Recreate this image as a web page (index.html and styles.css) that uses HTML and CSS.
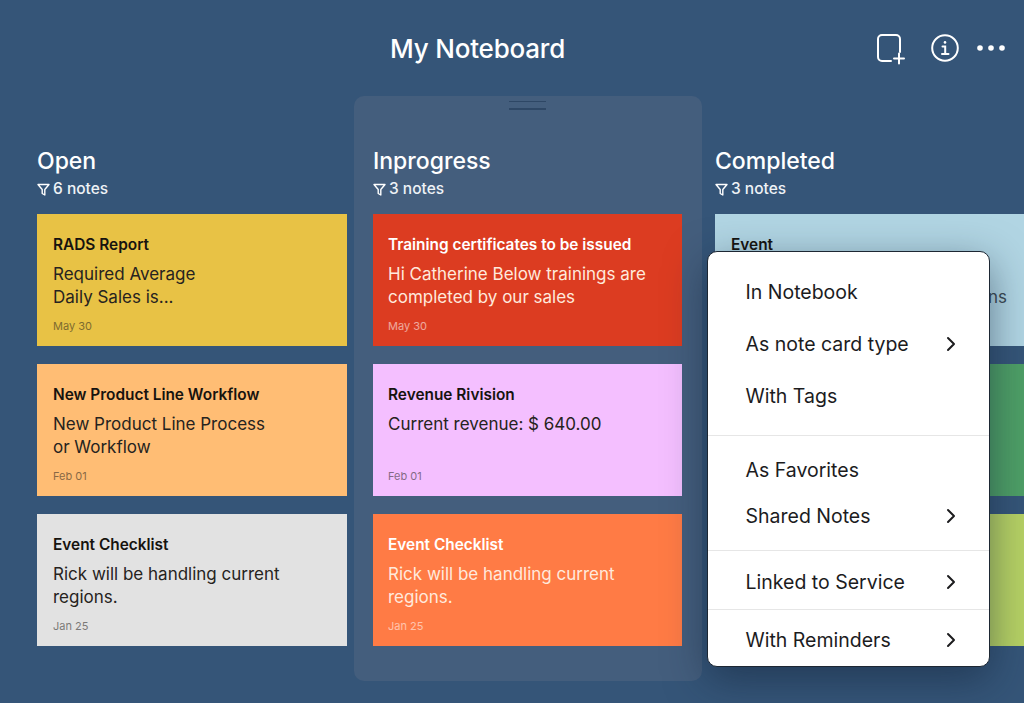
FILE: index.html
```html
<!DOCTYPE html>
<html lang="en">
<head>
  <meta charset="UTF-8" />
  <title>My Noteboard</title>
  <link rel="stylesheet" href="styles.css">
</head>
<body>

<header class="topbar">
  <h1>My Noteboard</h1>
  <div class="topbar-icons">
    <svg class="icon-new" width="30" height="32" viewBox="0 0 30 32" fill="none" stroke="#fff" stroke-width="2" stroke-linecap="round">
      <path d="M15 28H6a4 4 0 0 1-4-4V6a4 4 0 0 1 4-4h14a4 4 0 0 1 4 4v13"/>
      <path d="M23 20.500v10M18 25.500h10"/>
    </svg>
    <svg class="icon-info" width="28" height="28" viewBox="0 0 28 28" fill="none" stroke="#fff" stroke-width="2" stroke-linecap="round">
      <circle cx="14" cy="14" r="12.8"/>
      <circle cx="14" cy="8.4" r="1.3" fill="#fff" stroke="none"/>
      <path d="M11.5 12.5H14.2V19.5M11 20h6.5"/>
    </svg>
    <svg class="icon-more" width="28" height="6" viewBox="0 0 28 6" fill="#fff">
      <circle cx="3" cy="3" r="2.8"/><circle cx="14" cy="3" r="2.8"/><circle cx="25" cy="3" r="2.8"/>
    </svg>
  </div>
</header>

<main class="board">
  <section class="column">
    <h2>Open</h2>
    <p class="count"><svg width="13" height="13" viewBox="0 0 13 13" fill="none" stroke="#fff" stroke-width="1.4" stroke-linejoin="round"><path d="M1 1.500h11L7.800 6.500v5.500L5.200 10.500v-4z"/></svg> 6 notes</p>
    <article class="note yellow">
      <h3>RADS Report</h3>
      <p>Required Average<br>Daily Sales is...</p>
      <time>May 30</time>
    </article>
    <article class="note peach">
      <h3>New Product Line Workflow</h3>
      <p>New Product Line Process<br>or Workflow</p>
      <time>Feb 01</time>
    </article>
    <article class="note grey">
      <h3>Event Checklist</h3>
      <p>Rick will be handling current<br>regions.</p>
      <time>Jan 25</time>
    </article>
  </section>

  <section class="column dragging">
    <div class="handle"></div>
    <h2>Inprogress</h2>
    <p class="count"><svg width="13" height="13" viewBox="0 0 13 13" fill="none" stroke="#fff" stroke-width="1.4" stroke-linejoin="round"><path d="M1 1.500h11L7.800 6.500v5.500L5.200 10.500v-4z"/></svg> 3 notes</p>
    <article class="note red light">
      <h3>Training certificates to be issued</h3>
      <p>Hi Catherine Below trainings are<br>completed by our sales</p>
      <time>May 30</time>
    </article>
    <article class="note pink">
      <h3>Revenue Rivision</h3>
      <p>Current revenue: $ 640.00</p>
      <time>Feb 01</time>
    </article>
    <article class="note orange light">
      <h3>Event Checklist</h3>
      <p>Rick will be handling current<br>regions.</p>
      <time>Jan 25</time>
    </article>
  </section>

  <section class="column">
    <h2>Completed</h2>
    <p class="count"><svg width="13" height="13" viewBox="0 0 13 13" fill="none" stroke="#fff" stroke-width="1.4" stroke-linejoin="round"><path d="M1 1.500h11L7.800 6.500v5.500L5.200 10.500v-4z"/></svg> 3 notes</p>
    <article class="note blue">
      <h3>Event</h3>
      <p class="tail">ns</p>
    </article>
    <article class="note green"></article>
    <article class="note lime"></article>
  </section>
</main>

<div class="menu">
  <div class="menu-group first">
    <div class="menu-row tall">In Notebook</div>
    <div class="menu-row tall">As note card type <svg width="10" height="16" viewBox="0 0 10 16" fill="none" stroke="#1c1c1e" stroke-width="2" stroke-linecap="round" stroke-linejoin="round"><path d="M2 2l6 6-6 6"/></svg></div>
    <div class="menu-row tall">With Tags</div>
  </div>
  <div class="menu-group second">
    <div class="menu-row">As Favorites</div>
    <div class="menu-row">Shared Notes <svg width="10" height="16" viewBox="0 0 10 16" fill="none" stroke="#1c1c1e" stroke-width="2" stroke-linecap="round" stroke-linejoin="round"><path d="M2 2l6 6-6 6"/></svg></div>
  </div>
  <div class="menu-group third">
    <div class="menu-row">Linked to Service <svg width="10" height="16" viewBox="0 0 10 16" fill="none" stroke="#1c1c1e" stroke-width="2" stroke-linecap="round" stroke-linejoin="round"><path d="M2 2l6 6-6 6"/></svg></div>
  </div>
  <div class="menu-group fourth">
    <div class="menu-row">With Reminders <svg width="10" height="16" viewBox="0 0 10 16" fill="none" stroke="#1c1c1e" stroke-width="2" stroke-linecap="round" stroke-linejoin="round"><path d="M2 2l6 6-6 6"/></svg></div>
  </div>
</div>

</body>
</html>
```

FILE: styles.css
```css
* { margin: 0; padding: 0; box-sizing: border-box; }
html, body { height: 100%; overflow: hidden; }
body {
  background: #355578;
  color: #fff;
  font-family: Inter, "Liberation Sans", sans-serif;
}

.topbar {
  display: flex;
  justify-content: space-between;
  align-items: center;
  height: 96px;
  padding: 0 19px 0 390px;
}
.topbar h1 {
  font-size: 26px;
  font-weight: 500;
  letter-spacing: -0.2px;
}
.topbar-icons {
  display: flex;
  align-items: center;
}
.icon-new { margin-right: 25px; margin-top: 1px; }
.icon-info { margin-right: 18px; }

.board {
  display: flex;
  align-items: flex-start;
  padding-left: 37px;
}
.column {
  flex: none;
  width: 310px;
  padding-top: 51px;
}
.column h2 {
  font-size: 23px;
  font-weight: 500;
  line-height: 28px;
}
.count {
  display: flex;
  align-items: center;
  gap: 3px;
  margin: 4px 0 15px;
  font-size: 15.5px;
  line-height: 20px;
  font-weight: 500;
  color: #eef2f6;
}

.column.dragging {
  position: relative;
  width: 348px;
  margin: 0 13px 0 7px;
  padding: 51px 20px 35px 19px;
  border-radius: 10px;
  background: #445e7d;
}
.handle {
  position: absolute;
  top: 5px;
  left: 155px;
  width: 37px;
  height: 9px;
  border-top: 1px solid #2e4765;
  border-bottom: 2px solid #2e4765;
}

.note {
  height: 132px;
  margin-bottom: 18px;
  padding: 21px 16px 0;
  color: #262320;
  display: flex;
  flex-direction: column;
}
.dragging .note { padding-left: 15px; }
.note:last-child { margin-bottom: 0; }
.note h3 {
  font-size: 15.4px;
  font-weight: 600;
  line-height: 20px;
  color: #16130f;
}
.note p {
  margin-top: 8px;
  font-size: 17px;
  line-height: 23px;
}
.note time {
  margin-top: auto;
  margin-bottom: 13px;
  font-size: 11px;
  line-height: 14px;
  opacity: 0.55;
}
.note.light h3 { color: #fff; }
.note.light p { color: #ffe9dc; }
.note.light time { color: #fff; }

.yellow { background: #e8c245; }
.peach { background: #ffbd74; }
.grey { background: #e2e2e2; }
.red { background: #dc3c21; }
.pink { background: #f4bfff; }
.orange { background: #ff7b45; }
.blue { background: #b1d5e3; }
.green { background: #4e9f66; }
.lime { background: #b6d164; }

.note .tail {
  margin-top: 31px;
  padding-right: 2px;
  text-align: right;
  color: #3c4a52;
}

.menu {
  position: absolute;
  top: 251px;
  left: 707px;
  width: 283px;
  height: 416px;
  background: #fff;
  border: 1px solid #1d2733;
  border-radius: 10px;
  color: #1c1c1e;
  box-shadow: 0 12px 40px rgba(16, 32, 54, 0.5);
}
.menu-group { border-bottom: 1px solid #e6e6e6; }
.menu-group.first { padding: 14px 0 13px; }
.menu-group.second { padding: 11px 0 11px; }
.menu-group.third { padding: 8px 0 4px; }
.menu-group.fourth { padding: 7px 0 0; border-bottom: 0; }
.menu-row {
  display: flex;
  justify-content: space-between;
  align-items: center;
  height: 46px;
  padding: 0 33px 0 37.5px;
  font-size: 19.5px;
}
.menu-row.tall { height: 52px; }
```
